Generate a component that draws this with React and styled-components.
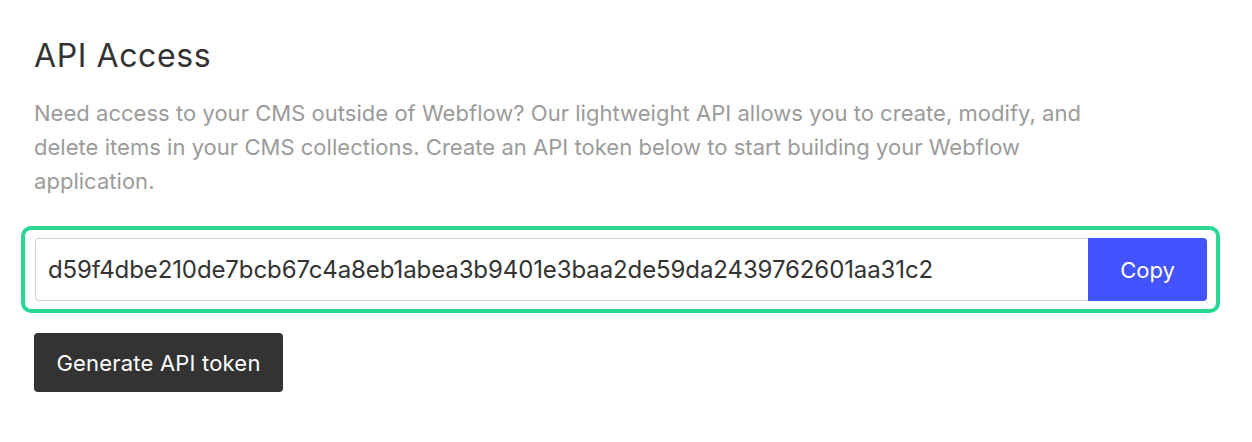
import React from "react";
import styled, { createGlobalStyle } from "styled-components";

const Global = createGlobalStyle`
  html, body { margin: 0; padding: 0; background: #fff; }
  body { font-family: Inter, "Open Sans", sans-serif; }
`;

const Page = styled.div`
  padding: 36px 32px 0 34px;
  display: flex;
  flex-direction: column;
`;

const Title = styled.h2`
  margin: 0;
  font-weight: 400;
  font-size: 32px;
  line-height: 40px;
  letter-spacing: 0.6px;
  color: #333;
`;

const Lead = styled.p`
  margin: 20px 0 0;
  max-width: 1075px;
  font-size: 22px;
  line-height: 34px;
  letter-spacing: 0.03px;
  color: #9b9b9b;
`;

const TokenFrame = styled.div`
  margin: 28px 0 0 -13px;
  width: 1199px;
  box-sizing: border-box;
  border: 4px solid #2bd794;
  border-radius: 10px;
  padding: 8px 9px 8px 10px;
  display: flex;
`;

const TokenInput = styled.div`
  flex: 1;
  height: 63px;
  box-sizing: border-box;
  border: 1px solid #d4d4d4;
  border-right: none;
  border-radius: 4px 0 0 4px;
  padding: 0 12px;
  display: flex;
  align-items: center;
  font-size: 24px;
  letter-spacing: -0.1px;
  color: #333;
`;

const CopyButton = styled.button`
  width: 119px;
  height: 63px;
  border: none;
  border-radius: 0 4px 4px 0;
  background: #4353ff;
  color: #fff;
  font-family: inherit;
  font-size: 22px;
  cursor: pointer;
`;

const GenerateButton = styled.button`
  margin-top: 20px;
  align-self: flex-start;
  width: 249px;
  height: 59px;
  border: none;
  border-radius: 4px;
  background: #333;
  color: #fff;
  font-family: inherit;
  font-size: 22px;
  letter-spacing: 0.2px;
  cursor: pointer;
`;

export default function App() {
  return (
    <>
      <Global />
      <Page>
        <Title>API Access</Title>
        <Lead>
          Need access to your CMS outside of Webflow? Our lightweight API allows you to create, modify, and
          delete items in your CMS collections. Create an API token below to start building your Webflow
          application.
        </Lead>
        <TokenFrame>
          <TokenInput>d59f4dbe210de7bcb67c4a8eb1abea3b9401e3baa2de59da2439762601aa31c2</TokenInput>
          <CopyButton>Copy</CopyButton>
        </TokenFrame>
        <GenerateButton>Generate API token</GenerateButton>
      </Page>
    </>
  );
}
